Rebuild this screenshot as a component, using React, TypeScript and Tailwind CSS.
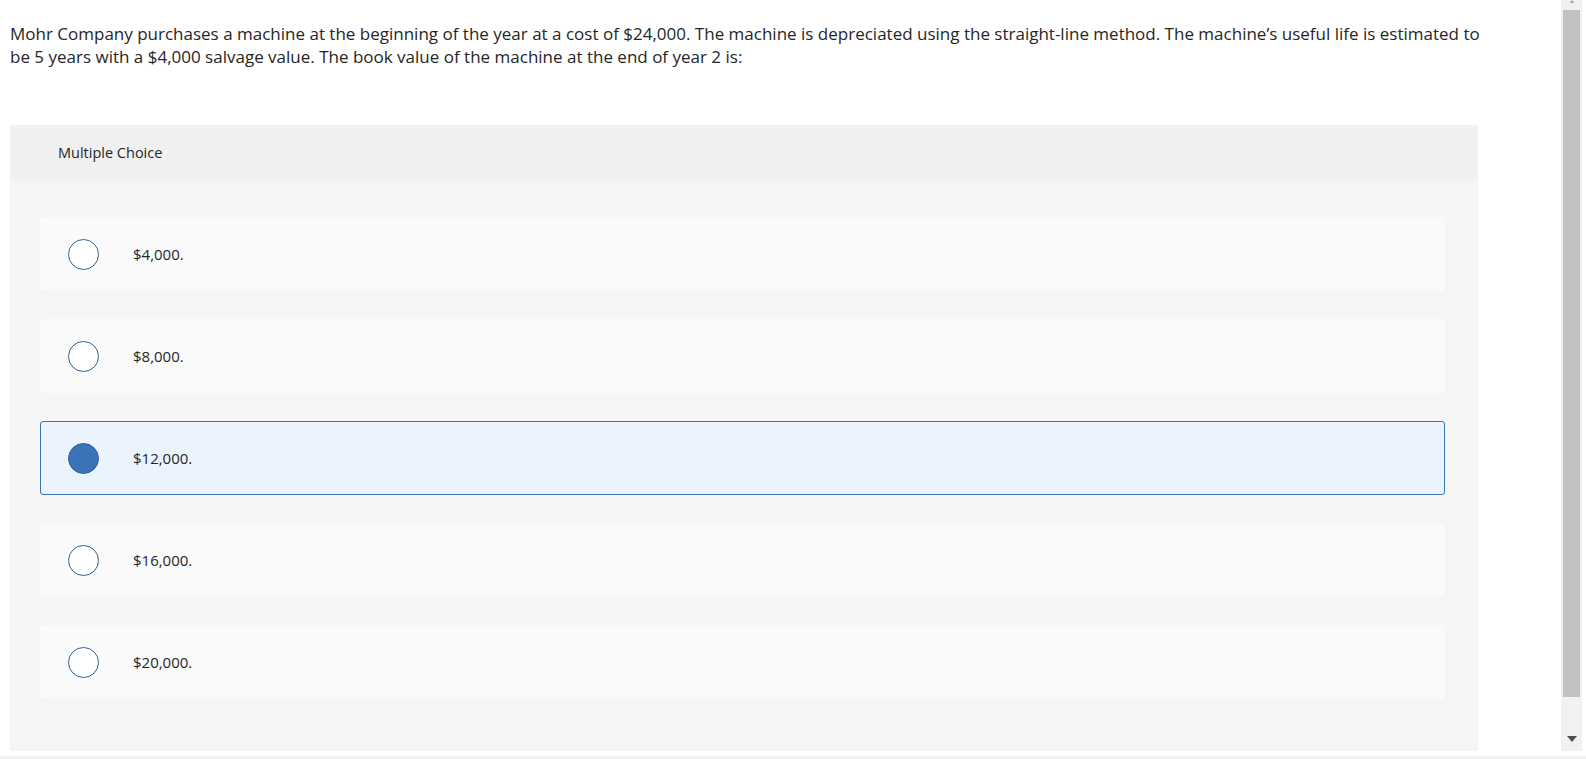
const choices = ["$4,000.", "$8,000.", "$12,000.", "$16,000.", "$20,000."];
const selectedIndex = 2;

function Radio({ checked }: { checked: boolean }) {
  return checked ? (
    <span className="block h-[31px] w-[31px] shrink-0 rounded-full border border-[#2c5f97] bg-[#3a74b7]" />
  ) : (
    <span className="block h-[31px] w-[31px] shrink-0 rounded-full border-[1.5px] border-[#2f6096] bg-white" />
  );
}

function ScrollTrack() {
  return (
    <div className="flex h-[751px] w-[21px] flex-col items-center bg-[#f1f1f1]">
      <svg viewBox="0 0 10 4" className="h-[3px] w-[10px] text-[#a3a3a3]" fill="currentColor">
        <path d="M2 4 L5 0 L8 4 Z" />
      </svg>
      <div className="mt-[7px] h-[687px] w-[17px] bg-[#c1c1c1]" />
      <div className="flex flex-1 items-end pb-[9px]">
        <svg viewBox="0 0 10 6" className="h-[6px] w-[10px] text-[#505050]" fill="currentColor">
          <path d="M0 0 H10 L5 6 Z" />
        </svg>
      </div>
    </div>
  );
}

export default function App() {
  return (
    <div className="flex h-[759px] w-[1586px] flex-col overflow-hidden bg-white font-['Open_Sans',sans-serif] text-[#262626]">
      <div className="flex h-[751px]">
        <div className="w-[1561px] pl-[10px]">
          <p className="mt-[22px] w-[1490px] text-[17px] leading-[23px]">
            Mohr Company purchases a machine at the beginning of the year at a cost of $24,000. The machine is depreciated using the straight-line method. The machine’s useful life is estimated to be 5 years with a $4,000 salvage value. The book value of the machine at the end of year 2 is:
          </p>
          <div className="mt-[57px] w-[1468px] overflow-hidden rounded-t-[3px] bg-[#f5f5f5]">
            <div className="flex h-[56px] items-center bg-[#f0f0f0] pl-[48px] text-[14.5px]">
              Multiple Choice
            </div>
            <div className="flex flex-col gap-[28px] pb-[52px] pl-[30px] pr-[33px] pt-[36px]">
              {choices.map((choice, i) => {
                const checked = i === selectedIndex;
                return (
                  <div
                    key={choice}
                    className={
                      checked
                        ? "flex h-[74px] items-center rounded-[3px] border border-[#3a75b8] bg-[#ebf3fc] pl-[27px]"
                        : "flex h-[74px] items-center rounded-[3px] bg-[#fafafa] pl-[28px]"
                    }
                  >
                    <Radio checked={checked} />
                    <span className="ml-[34px] text-[15px]">{choice}</span>
                  </div>
                );
              })}
            </div>
          </div>
        </div>
        <ScrollTrack />
      </div>
      <div className="mt-[5px] h-[3px] bg-[#f2f2f2]" />
    </div>
  );
}
